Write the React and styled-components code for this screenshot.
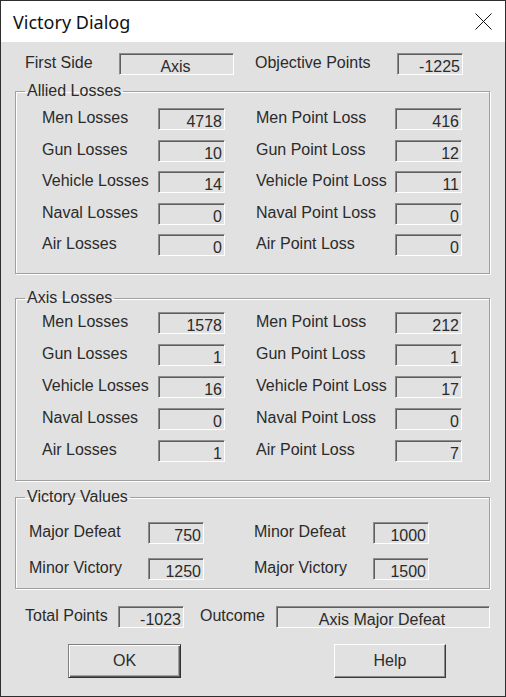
import React from 'react';
import styled, { createGlobalStyle } from 'styled-components';

const GlobalStyle = createGlobalStyle`
  html, body {
    margin: 0;
    padding: 0;
    background: #e1e1e1;
  }
`;

const alliedLosses = [
  ['Men Losses', '4718', 'Men Point Loss', '416'],
  ['Gun Losses', '10', 'Gun Point Loss', '12'],
  ['Vehicle Losses', '14', 'Vehicle Point Loss', '11'],
  ['Naval Losses', '0', 'Naval Point Loss', '0'],
  ['Air Losses', '0', 'Air Point Loss', '0']
];

const axisLosses = [
  ['Men Losses', '1578', 'Men Point Loss', '212'],
  ['Gun Losses', '1', 'Gun Point Loss', '1'],
  ['Vehicle Losses', '16', 'Vehicle Point Loss', '17'],
  ['Naval Losses', '0', 'Naval Point Loss', '0'],
  ['Air Losses', '1', 'Air Point Loss', '7']
];

const victoryValues = [
  ['Major Defeat', '750', 'Minor Defeat', '1000'],
  ['Minor Victory', '1250', 'Major Victory', '1500']
];

const CloseIcon = () => (
  <svg width='17' height='17' viewBox='0 0 17 17'>
    <path d='M0.5 0.5 L16.5 16.5 M16.5 0.5 L0.5 16.5' stroke='#111' strokeWidth='1' fill='none' />
  </svg>
);

// one group box: caption + grid of label/field pairs
const LossGroup = ({ title, rows, cols, widths, gap, pad }) => (
  <Group $mt={pad.mt}>
    <Caption>{title}</Caption>
    <PairGrid $cols={cols} $gap={gap} $pad={pad}>
      {rows.map(r => (
        <React.Fragment key={r[0]}>
          <Label>{r[0]}</Label>
          <Field $w={widths[0]}>{r[1]}</Field>
          <Label>{r[2]}</Label>
          <Field $w={widths[1]}>{r[3]}</Field>
        </React.Fragment>
      ))}
    </PairGrid>
  </Group>
);

export default function App() {
  return (
    <>
      <GlobalStyle />
      <Window>
        <TitleBar>
          <Title>Victory Dialog</Title>
          <CloseIcon />
        </TitleBar>
        <Body>
          <Row $cols='94px 136px 142px 66px'>
            <Label>First Side</Label>
            <Field $w={115} $align='center'>Axis</Field>
            <Label>Objective Points</Label>
            <Field $w={66}>-1225</Field>
          </Row>

          <LossGroup
            title='Allied Losses'
            rows={alliedLosses}
            cols='116px 98px 139px 67px'
            widths={[67, 67]}
            gap={9.5}
            pad={{ mt: 7, t: 8, l: 26, b: 17 }}
          />

          <LossGroup
            title='Axis Losses'
            rows={axisLosses}
            cols='116px 98px 139px 67px'
            widths={[67, 67]}
            gap={10}
            pad={{ mt: 15, t: 5, l: 26, b: 18 }}
          />

          <LossGroup
            title='Victory Values'
            rows={victoryValues}
            cols='119px 106px 119px 56px'
            widths={[56, 56]}
            gap={14}
            pad={{ mt: 7, t: 16, l: 13, b: 8 }}
          />

          <Row $cols='93px 82px 76px 214px' $mt={17}>
            <Label>Total Points</Label>
            <Field $w={66}>-1023</Field>
            <Label>Outcome</Label>
            <Field $w={214} $align='center'>Axis Major Defeat</Field>
          </Row>

          <ButtonRow>
            <Button $default>OK</Button>
            <Button>Help</Button>
          </ButtonRow>
        </Body>
      </Window>
    </>
  );
}

const Window = styled.div`
  width: 506px;
  height: 697px;
  box-sizing: border-box;
  border: 1px solid #2e2e2e;
  background: #e1e1e1;
  display: flex;
  flex-direction: column;
  font-family: 'Liberation Sans', Arial, sans-serif;
  font-size: 16px;
  color: #2b2b2b;
`;

const TitleBar = styled.div`
  height: 41px;
  flex-shrink: 0;
  background: #fff;
  display: flex;
  align-items: center;
  justify-content: space-between;
  padding: 0 13px 0 12px;
`;

const Title = styled.span`
  font-family: 'Noto Sans', 'Open Sans', sans-serif;
  font-size: 18px;
  color: #111;
`;

const Body = styled.div`
  flex: 1;
  display: flex;
  flex-direction: column;
  padding: 11px 15px 0 14px;
`;

const Row = styled.div`
  display: grid;
  grid-template-columns: ${props => props.$cols};
  align-items: center;
  height: 22px;
  margin-top: ${props => props.$mt || 0}px;
  padding-left: 10px;
`;

const Label = styled.span`
  line-height: 18px;
  padding-bottom: 2px;
  white-space: nowrap;
`;

const Field = styled.div`
  width: ${props => props.$w}px;
  height: 22px;
  box-sizing: border-box;
  border: 1px solid;
  border-color: #8c8c8c #fff #fff #8c8c8c;
  box-shadow: inset 1px 1px 0 #5e5e5e;
  padding: 3px 2px 0 0;
  line-height: 19px;
  text-align: ${props => props.$align || 'right'};
  white-space: nowrap;
`;

const Group = styled.fieldset`
  margin: ${props => props.$mt}px 0 0 0;
  padding: 0;
  min-inline-size: 0;
  border: 1px solid #a0a0a0;
  box-shadow: 1px 1px 0 #fff, inset 1px 1px 0 #fff;
`;

const Caption = styled.legend`
  margin-left: 9px;
  padding: 0 2px;
  line-height: 18px;
`;

const PairGrid = styled.div`
  display: grid;
  grid-template-columns: ${props => props.$cols};
  grid-auto-rows: 22px;
  row-gap: ${props => props.$gap}px;
  align-items: center;
  padding: ${props => props.$pad.t}px 0 ${props => props.$pad.b}px ${props => props.$pad.l}px;
`;

const ButtonRow = styled.div`
  display: flex;
  gap: 153px;
  margin-top: 16px;
  padding-left: 53px;
`;

const Button = styled.button`
  width: ${props => (props.$default ? 113 : 112)}px;
  height: 34px;
  box-sizing: border-box;
  background: #e1e1e1;
  font-family: 'Liberation Sans', Arial, sans-serif;
  font-size: 16px;
  color: #2b2b2b;
  padding: 0;
  border: 1px solid;
  border-color: ${props =>
    props.$default ? '#808080 #303030 #303030 #808080' : '#fff #3a3a3a #3a3a3a #fff'};
  box-shadow: ${props =>
    props.$default
      ? 'inset 1px 1px 0 #fff, inset -1px -1px 0 #5a5a5a, inset -2px -2px 0 #a0a0a0'
      : 'inset -1px -1px 0 #8a8a8a'};
`;
